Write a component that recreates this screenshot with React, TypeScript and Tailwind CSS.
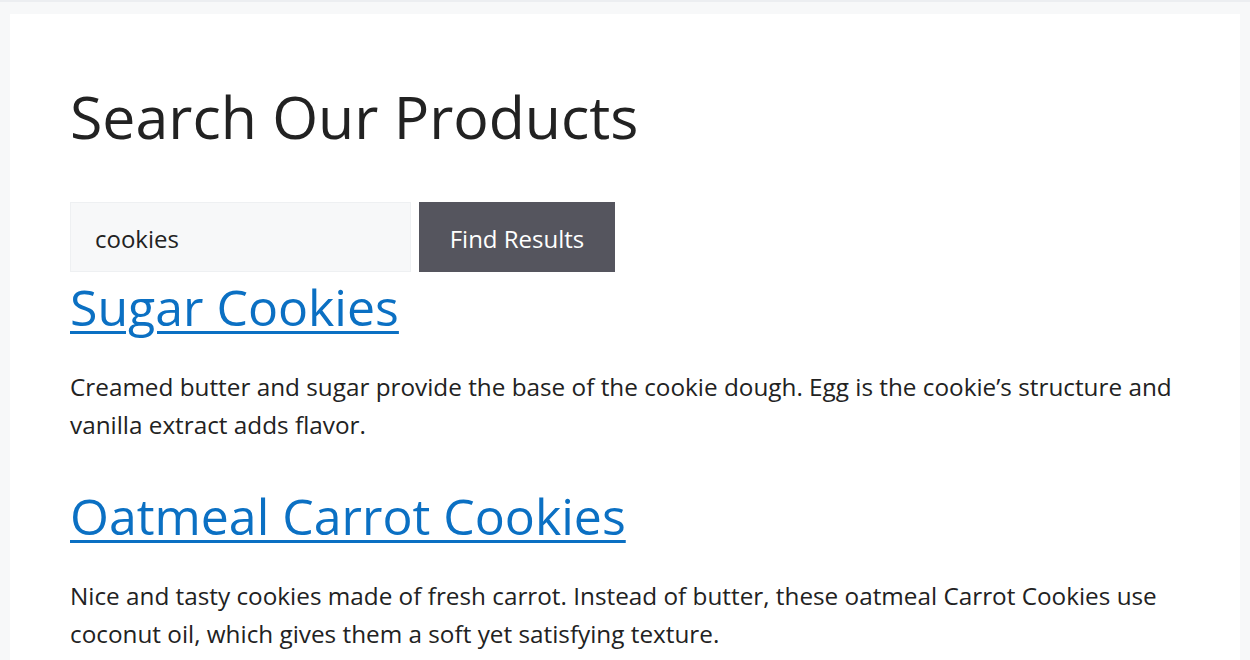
export default function App() {
  const results = [
    {
      title: 'Sugar Cookies',
      text: 'Creamed butter and sugar provide the base of the cookie dough. Egg is the cookie’s structure and vanilla extract adds flavor.',
    },
    {
      title: 'Oatmeal Carrot Cookies',
      text: 'Nice and tasty cookies made of fresh carrot. Instead of butter, these oatmeal Carrot Cookies use coconut oil, which gives them a soft yet satisfying texture.',
    },
  ]

  return (
    <div
      className="h-screen overflow-hidden bg-[#f7f8f9] border-t-2 border-[#eceef1] pt-[12px] px-[10px] text-[#222222]"
      style={{ fontFamily: '"Open Sans", "Noto Sans", sans-serif' }}
    >
      <div className="bg-white px-[60px] pt-[62px] h-full">
        <h1 className="text-[59px] leading-[80px] font-normal">Search Our Products</h1>

        <form className="mt-[46px] flex gap-[8px]" onSubmit={(e) => e.preventDefault()}>
          <input
            defaultValue="cookies"
            className="w-[341px] h-[70px] bg-[#f7f8f9] border border-[#eef0f2] px-[24px] pt-[3px] text-[24px] text-[#222222] outline-none"
          />
          <button className="w-[196px] h-[70px] bg-[#55555e] pt-[3px] text-white text-[24px]">Find Results</button>
        </form>

        {results.map((r) => (
          <article key={r.title} className="mb-[37px]">
            <h2 className="text-[50px] leading-[70px]">
              <a
                href="#"
                className="text-[#0b70c3] underline underline-offset-[5px] decoration-[3px]"
              >
                {r.title}
              </a>
            </h2>
            <p className="mt-[26px] text-[24.3px] leading-[38px]">{r.text}</p>
          </article>
        ))}
      </div>
    </div>
  )
}
